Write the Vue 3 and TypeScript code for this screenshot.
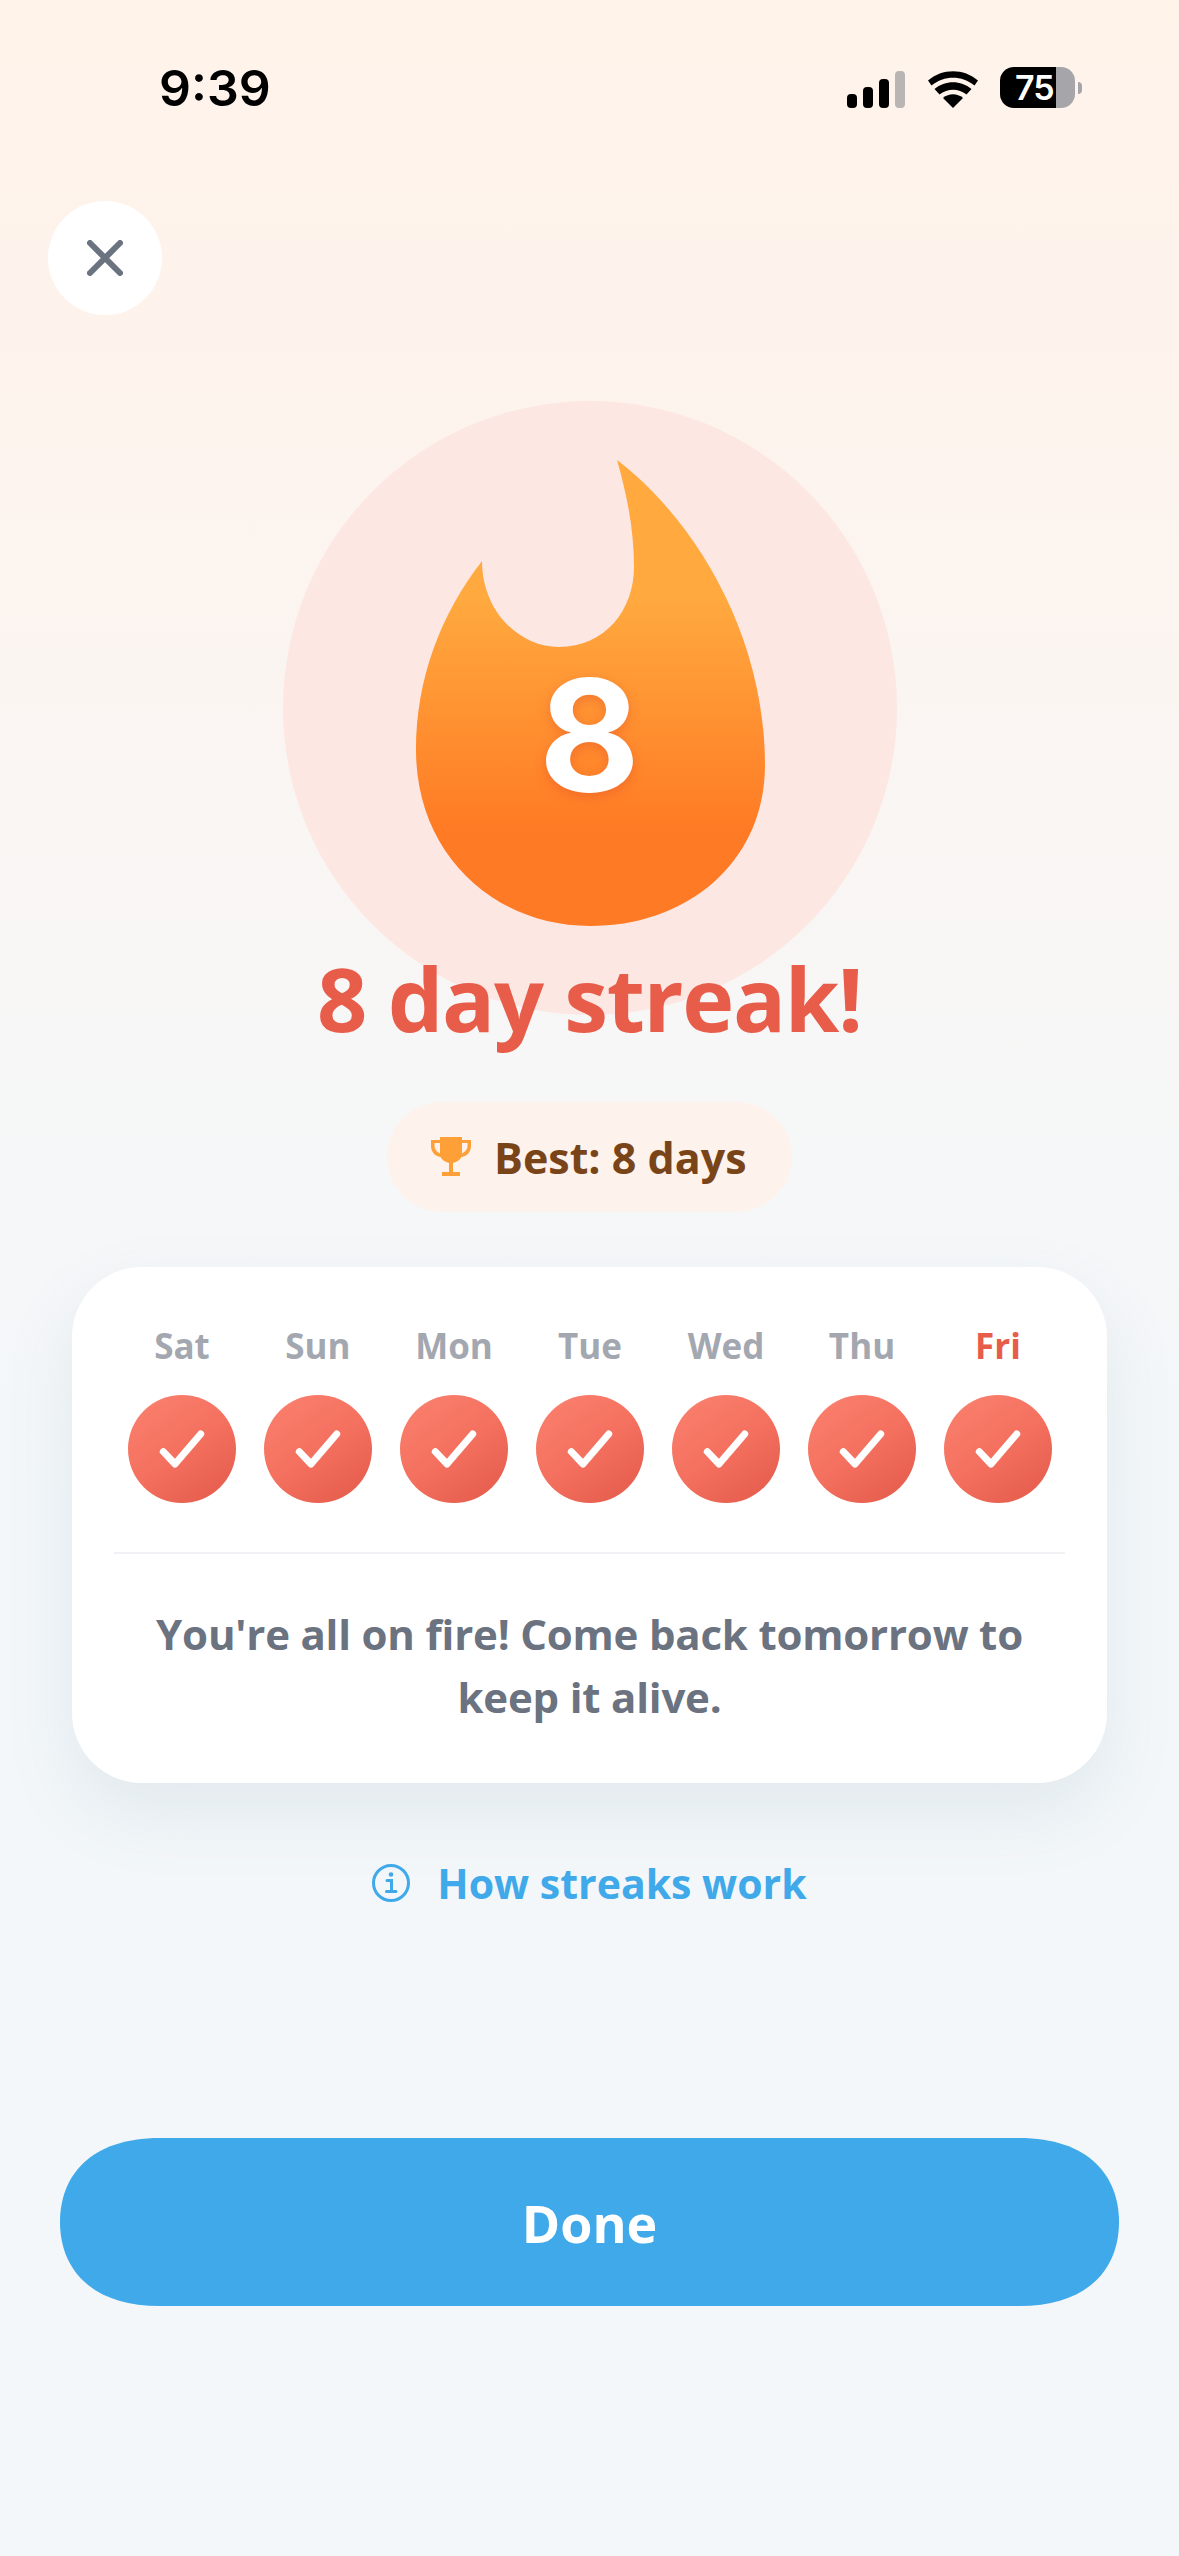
<script setup lang="ts">
interface Day { label: string; today?: boolean }
const days: Day[] = [
  { label: 'Sat' }, { label: 'Sun' }, { label: 'Mon' }, { label: 'Tue' },
  { label: 'Wed' }, { label: 'Thu' }, { label: 'Fri', today: true },
]
</script>

<template>
  <div class="page">
    <div class="status">
      <span class="time">9:39</span>
      <div class="status-icons">
        <svg class="signal" width="58" height="37" viewBox="0 0 58 37">
          <rect x="0" y="23" width="10" height="14" rx="4" fill="#000" />
          <rect x="16" y="16" width="10" height="21" rx="4" fill="#000" />
          <rect x="32" y="8" width="10" height="29" rx="4" fill="#000" />
          <rect x="48" y="0" width="10" height="37" rx="4" fill="#b9b5b4" />
        </svg>
        <svg class="wifi" width="50" height="37" viewBox="0 0 50 37">
          <path d="M25 37 L15 27 C21 22 29 22 35 27 Z" fill="#000" />
          <path d="M11.5 23.5 L6.5 18 C17 9 33 9 43.5 18 L38.5 23.5 C30.5 17 19.5 17 11.5 23.5 Z" fill="#000" />
          <path d="M3.5 14.5 L0 9.5 C14 -3 36 -3 50 9.5 L46.5 14.5 C34 4 16 4 3.5 14.5 Z" fill="#000" />
        </svg>
        <div class="battery"><span class="battery-num">75</span></div>
        <span class="battery-nub"></span>
      </div>
    </div>

    <button class="close" type="button" aria-label="Close">
      <svg width="36" height="36" viewBox="0 0 36 36">
        <path d="M3 3 L33 33 M33 3 L3 33" stroke="#6b7280" stroke-width="6" stroke-linecap="round" fill="none" />
      </svg>
    </button>

    <div class="hero">
      <svg class="flame" width="350" height="466" viewBox="416 460 350 466">
        <defs>
          <linearGradient id="flameFill" x1="0" y1="0" x2="0" y2="1">
            <stop offset="0.3" stop-color="#ffa93f" />
            <stop offset="0.8" stop-color="#ff7a24" />
          </linearGradient>
        </defs>
        <path
          d="M617 460 C690 515 765 630 765 765 C765 860 690 926 590 926 C495 926 416 855 416 750 C416 680 440 615 482 561 C482 610 518 647 559 647 C605 647 634 610 634 567 C634 530 627 495 617 460 Z"
          fill="url(#flameFill)"
        />
      </svg>
      <span class="flame-num">8</span>
    </div>

    <h1 class="title">8 day streak!</h1>

    <div class="best">
      <svg width="40" height="40" viewBox="0 0 40 40">
        <path d="M9 0 H31 V3 H40 V9 C40 15 36 19 30.500 20 C29 23 26 25 22 26 V35 H29 V39 H11 V35 H18 V26 C14 25 11 23 9.500 20 C4 19 0 15 0 9 V3 H9 Z M9 6 H3.500 V9 C3.500 12 5.500 15 9 16.500 Z M31 6 V16.500 C34.500 15 36.500 12 36.500 9 V6 Z" fill="#ff9f38" fill-rule="evenodd" />
      </svg>
      <span>Best: 8 days</span>
    </div>

    <section class="card">
      <div class="week">
        <div v-for="d in days" :key="d.label" class="day">
          <span class="day-label" :class="{ today: d.today }">{{ d.label }}</span>
          <span class="day-dot">
            <svg width="108" height="108" viewBox="0 0 108 108">
              <path d="M35.300 56.700 L47 69 L72.700 39" stroke="#fff" stroke-width="7" stroke-linecap="round" stroke-linejoin="round" fill="none" />
            </svg>
          </span>
        </div>
      </div>
      <div class="divider"></div>
      <p class="message">You're all on fire! Come back tomorrow to keep it alive.</p>
    </section>

    <a class="how" href="#">
      <svg width="38" height="38" viewBox="0 0 38 38">
        <circle cx="19" cy="19" r="17.500" stroke="#3fa9ea" stroke-width="3" fill="none" />
        <circle cx="19" cy="10.500" r="2.300" fill="#3fa9ea" />
        <path d="M15 16.500 H19.500 V27 M14.500 27.500 H24" stroke="#3fa9ea" stroke-width="3" stroke-linecap="round" fill="none" />
      </svg>
      <span>How streaks work</span>
    </a>

    <button class="done" type="button">Done</button>
  </div>
</template>

<style>
html, body { margin: 0; padding: 0; background: #f3f7fa; }
</style>

<style scoped>
.page {
  width: 1179px;
  height: 2556px;
  display: flex;
  flex-direction: column;
  align-items: center;
  overflow: hidden;
  background: linear-gradient(180deg, #fff3ea 0, #fef3ec 330px, #f7f7f7 1060px, #f3f7fa 1500px, #f3f7fa 100%);
  font-family: "Open Sans", "Noto Sans", sans-serif;
}
.status {
  width: 100%;
  box-sizing: border-box;
  height: 201px;
  padding: 58px 97px 0 159px;
  display: flex;
  justify-content: space-between;
  align-items: flex-start;
}
.time {
  font-family: Inter, sans-serif;
  font-weight: 600;
  font-size: 50px;
  line-height: 60px;
  color: #000;
}
.status-icons {
  display: flex;
  align-items: center;
  height: 41px;
  margin-top: 9px;
}
.signal { margin-top: 4px; }
.wifi { margin-left: 23px; margin-top: 4px; }
.battery {
  width: 75px;
  height: 41px;
  margin-left: 22px;
  border-radius: 14px;
  background: linear-gradient(90deg, #000 0, #000 56px, #a5a5aa 56px, #a5a5aa 100%);
  overflow: hidden;
  box-sizing: border-box;
  padding-left: 15px;
  font-family: Inter, sans-serif;
  font-weight: 600;
  color: #fff;
  font-size: 34px;
  line-height: 41px;
}
.battery-num { letter-spacing: -1px; }
.battery-nub {
  width: 4px;
  height: 12px;
  margin-left: 3px;
  background: #a5a5aa;
  border-radius: 0 6px 6px 0;
}
.close {
  align-self: flex-start;
  margin-left: 48px;
  width: 114px;
  height: 114px;
  border: 0;
  padding: 0;
  border-radius: 50%;
  background: #fff;
  display: flex;
  align-items: center;
  justify-content: center;
}
.hero {
  position: relative;
  flex: none;
  width: 614px;
  height: 614px;
  margin-top: 86px;
  border-radius: 50%;
  background: #fce7e3;
}
.flame {
  position: absolute;
  left: 133px;
  top: 59px;
}
.flame-num {
  position: absolute;
  left: 0;
  right: 0;
  top: 234px;
  text-align: center;
  font-family: Inter, sans-serif;
  font-weight: 750;
  font-size: 155px;
  line-height: 200px;
  color: #fff;
  text-shadow: 0 4px 12px rgba(220, 70, 40, 0.35);
}
.title {
  position: relative;
  margin: -72px 0 0;
  font-weight: 750;
  font-size: 88px;
  line-height: 110px;
  letter-spacing: -1.300px;
  color: #e85c4a;
  white-space: nowrap;
}
.best {
  margin-top: 49px;
  width: 405px;
  height: 110px;
  box-sizing: border-box;
  padding-left: 44px;
  border-radius: 55px;
  background: #fdf3ec;
  display: flex;
  align-items: center;
  gap: 23px;
  font-weight: 750;
  font-size: 43px;
  color: #7a4419;
}
.card {
  margin-top: 55px;
  width: 1035px;
  height: 516px;
  box-sizing: border-box;
  padding: 52px 42px 0;
  border-radius: 70px;
  background: #fff;
  box-shadow: 0 30px 70px rgba(100, 130, 150, 0.12);
}
.week {
  display: grid;
  grid-template-columns: repeat(7, 108px);
  column-gap: 28px;
  padding: 0 14px;
}
.day {
  display: flex;
  flex-direction: column;
  align-items: center;
  gap: 22px;
}
.day-label {
  font-weight: 750;
  font-size: 35px;
  line-height: 54px;
  color: #a3a7b0;
}
.day-label.today { color: #e85c4a; }
.day-dot {
  display: block;
  width: 108px;
  height: 108px;
  border-radius: 50%;
  background: linear-gradient(145deg, #fb826f 0%, #f4705f 50%, #e35a49 100%);
}
.day-dot svg { display: block; }
.divider {
  margin-top: 49px;
  height: 2px;
  background: #f0f2f5;
}
.message {
  margin: 48px 30px 0;
  text-align: center;
  font-weight: 660;
  font-size: 42px;
  line-height: 63px;
  letter-spacing: -0.200px;
  color: #6b7280;
}
.how {
  margin-top: 71px;
  display: flex;
  align-items: center;
  gap: 27px;
  font-weight: 660;
  font-size: 41px;
  line-height: 58px;
  color: #3fa9ea;
  text-decoration: none;
}
.done {
  margin-top: 226px;
  width: 1059px;
  height: 168px;
  border: 0;
  padding: 0;
  clip-path: path("M0 84 C0 38 30 0 100 0 H959 C1029 0 1059 38 1059 84 C1059 130 1029 168 959 168 H100 C30 168 0 130 0 84 Z");
  background: #3fa9ea;
  color: #fff;
  font-family: inherit;
  font-weight: 750;
  font-size: 52px;
}
</style>
